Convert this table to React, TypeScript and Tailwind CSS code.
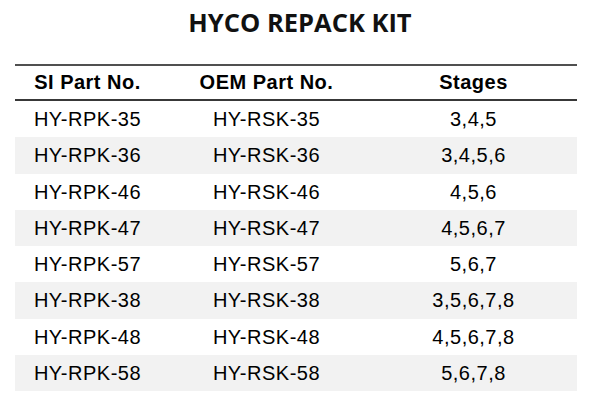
const rows = [
  ["HY-RPK-35", "HY-RSK-35", "3,4,5"],
  ["HY-RPK-36", "HY-RSK-36", "3,4,5,6"],
  ["HY-RPK-46", "HY-RSK-46", "4,5,6"],
  ["HY-RPK-47", "HY-RSK-47", "4,5,6,7"],
  ["HY-RPK-57", "HY-RSK-57", "5,6,7"],
  ["HY-RPK-38", "HY-RSK-38", "3,5,6,7,8"],
  ["HY-RPK-48", "HY-RSK-48", "4,5,6,7,8"],
  ["HY-RPK-58", "HY-RSK-58", "5,6,7,8"],
];

export default function App() {
  return (
    <div className="w-[607px] h-[416px] bg-white overflow-hidden">
      <div className="ml-[15px] w-[562px] pt-[9px]">
        {/* Title */}
        <h1 className="h-[26px] pl-[8px] text-center text-[25.5px] leading-[26px] font-bold text-[#111] [font-family:'Open_Sans',sans-serif]">
          HYCO REPACK KIT
        </h1>

        {/* Table */}
        <div className="mt-[29px] border-t-2 border-[#505050] text-black [font-family:'Liberation_Sans',Arial,sans-serif]">
          <div className="grid grid-cols-[145px_213px_201px] h-[35px] border-b-2 border-[#383838] items-center text-[20px] leading-[33px] font-bold tracking-[0.5px]">
            <div className="text-center">SI Part No.</div>
            <div className="text-center">OEM Part No.</div>
            <div className="text-center">Stages</div>
          </div>
          {rows.map((r, i) => (
            <div
              key={r[0]}
              className={`grid grid-cols-[145px_213px_201px] h-[36.25px] items-center text-[20px] leading-[36px] tracking-[0.5px] ${
                i % 2 === 1 ? "bg-[#f2f2f2]" : "bg-white"
              }`}
            >
              <div className="text-center">{r[0]}</div>
              <div className="text-center">{r[1]}</div>
              <div className="text-center">{r[2]}</div>
            </div>
          ))}
        </div>
      </div>
    </div>
  );
}
